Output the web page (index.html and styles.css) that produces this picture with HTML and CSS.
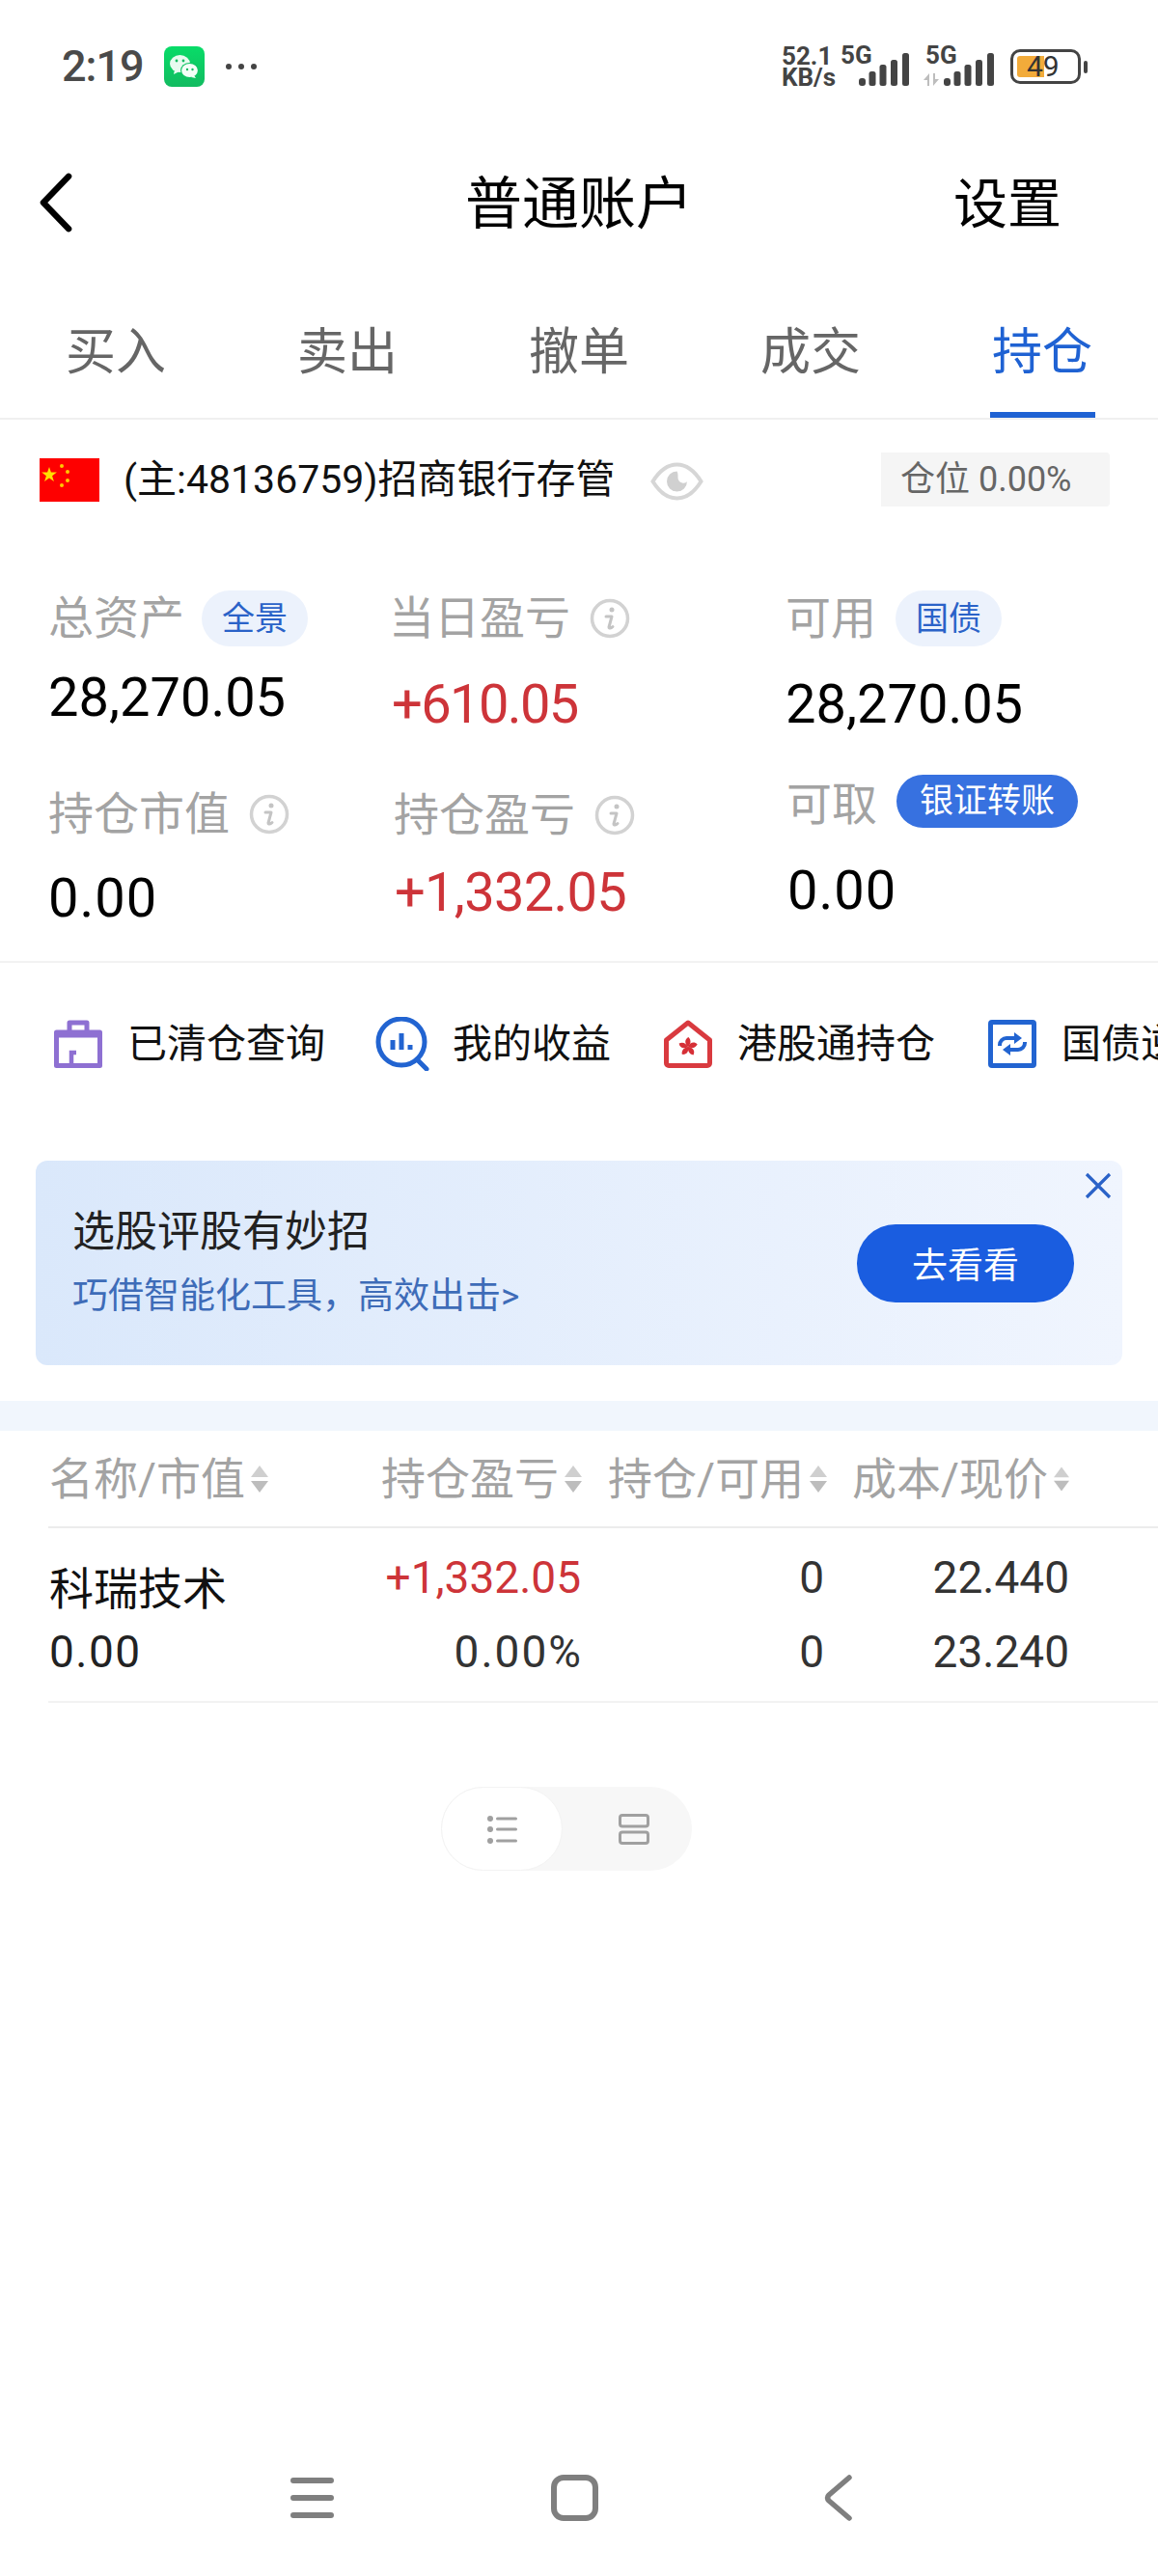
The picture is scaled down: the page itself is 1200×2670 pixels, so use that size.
FILE: index.html
```html
<!DOCTYPE html>
<html lang="zh-CN">
<head>
<meta charset="utf-8">
<title>普通账户</title>
<link rel="stylesheet" href="styles.css">
</head>
<body>
<div class="page">
  <header class="statusbar">
    <div class="status-left">
      <span class="time">2:19</span>
      <svg class="wechat" viewBox="0 0 42 42"><defs><linearGradient id="wg" x1="0" y1="0" x2="0" y2="1"><stop offset="0" stop-color="#08dc68"/><stop offset="1" stop-color="#12bb60"/></linearGradient></defs><rect width="42" height="42" rx="8" fill="url(#wg)"/><ellipse cx="16.5" cy="18" rx="10.5" ry="9" fill="#e8fbf0"/><path d="M11 24l-1 5 6-3z" fill="#e8fbf0"/><ellipse cx="26.5" cy="25" rx="9.5" ry="8" fill="#12c465"/><ellipse cx="26.5" cy="25" rx="8.4" ry="7" fill="#f4fff8"/><path d="M31 30l2 3-5-1z" fill="#f4fff8"/><circle cx="13" cy="15" r="1.4" fill="#12bb60"/><circle cx="20" cy="15" r="1.4" fill="#12bb60"/><circle cx="24" cy="24" r="1.2" fill="#12bb60"/><circle cx="29.5" cy="24" r="1.2" fill="#12bb60"/></svg>
      <svg class="dots" viewBox="0 0 34 8"><circle cx="4" cy="4" r="3" fill="#444"/><circle cx="17" cy="4" r="3" fill="#444"/><circle cx="30" cy="4" r="3" fill="#444"/></svg>
    </div>
    <div class="status-right">
      <div class="speed"><span>52.1</span><span>KB/s</span></div>
      <div class="signal">
        <span class="sig-label">5G</span>
        <svg class="bars" viewBox="0 0 52 34"><rect x="0" y="26" width="7" height="8" rx="3" fill="#444"/><rect x="10.500" y="19" width="7" height="15" rx="2.500" fill="#444"/><rect x="21.500" y="12" width="7" height="22" rx="2.500" fill="#444"/><rect x="33" y="7" width="7" height="27" rx="2.500" fill="#444"/><rect x="45" y="0" width="7" height="34" rx="2.500" fill="#444"/></svg>
      </div>
      <div class="signal signal-two">
        <span class="sig-label">5G</span>
        <svg class="arrows" viewBox="0 0 16 13"><path d="M6 0v13H4V7H0zM10 13V0h2v6h4z" fill="#bdbdbd"/></svg>
        <svg class="bars" viewBox="0 0 52 34"><rect x="0" y="26" width="7" height="8" rx="3" fill="#444"/><rect x="10.500" y="19" width="7" height="15" rx="2.500" fill="#444"/><rect x="21.500" y="12" width="7" height="22" rx="2.500" fill="#444"/><rect x="33" y="7" width="7" height="27" rx="2.500" fill="#444"/><rect x="45" y="0" width="7" height="34" rx="2.500" fill="#444"/></svg>
      </div>
      <div class="battery"><span class="battery-fill"></span><span class="battery-num">49</span></div>
      <span class="battery-nub"></span>
    </div>
  </header>

  <nav class="navbar">
    <svg class="back" viewBox="0 0 36 64"><path d="M31 4 4 32l27 28" fill="none" stroke="#000" stroke-width="6.5" stroke-linecap="round" stroke-linejoin="round"/></svg>
    <h1 class="nav-title">普通账户</h1>
    <span class="nav-action">设置</span>
  </nav>

  <div class="tabs">
    <div class="tab"><span class="tab-label">买入</span></div>
    <div class="tab"><span class="tab-label">卖出</span></div>
    <div class="tab"><span class="tab-label">撤单</span></div>
    <div class="tab"><span class="tab-label">成交</span></div>
    <div class="tab tab-active"><span class="tab-label">持仓</span></div>
  </div>

  <section class="account">
    <svg class="flag" viewBox="0 0 62 45"><rect width="62" height="45" fill="#fe0000"/><path d="M10 9l1.900 5.600h6l-4.800 3.600 1.800 5.700-4.900-3.500-4.900 3.500 1.800-5.700-4.800-3.600h6z" fill="#ffe000"/><circle cx="23" cy="8" r="2" fill="#ffc800"/><circle cx="29" cy="14" r="2" fill="#ffc800"/><circle cx="29" cy="23" r="2" fill="#ffc800"/><circle cx="23" cy="28" r="2" fill="#ffc800"/></svg>
    <span class="account-name">(主:48136759)招商银行存管</span>
    <svg class="eye" viewBox="0 0 55 40"><path d="M2.500 20C10 8 18 2.500 27.500 2.500S45 8 52.500 20C45 32 37 37.500 27.500 37.500S10 32 2.500 20z" fill="none" stroke="#d6d6d6" stroke-width="4"/><path d="M27.500 9.500a10.500 10.500 0 1 0 10.500 10.500c-1 1.500-3 2-5 1.500-3-.8-4.500-3-4.500-5.500 0-2 .3-4.500-1-6.500z" fill="#d0d0d0"/></svg>
    <span class="position">仓位 0.00%</span>
  </section>

  <section class="stats">
    <div class="stat-col">
      <div class="stat-label"><span>总资产</span><span class="chip">全景</span></div>
      <div class="stat-value value-a">28,270.05</div>
      <div class="stat-label label-a"><span>持仓市值</span><svg class="info" viewBox="0 0 42 42"><circle cx="21" cy="21" r="18.500" fill="none" stroke="#d2d2d2" stroke-width="3.500"/><circle cx="23" cy="12" r="2.500" fill="#c4c4c4"/><path d="M17 19h6l-3 11c0 1.500 2 1.500 4-.5" fill="none" stroke="#c4c4c4" stroke-width="3" stroke-linecap="round" stroke-linejoin="round"/></svg></div>
      <div class="stat-value value-b">0.00</div>
    </div>
    <div class="stat-col">
      <div class="stat-label"><span>当日盈亏</span><svg class="info" viewBox="0 0 42 42"><circle cx="21" cy="21" r="18.500" fill="none" stroke="#d2d2d2" stroke-width="3.500"/><circle cx="23" cy="12" r="2.500" fill="#c4c4c4"/><path d="M17 19h6l-3 11c0 1.500 2 1.500 4-.5" fill="none" stroke="#c4c4c4" stroke-width="3" stroke-linecap="round" stroke-linejoin="round"/></svg></div>
      <div class="stat-value up value-c">+610.05</div>
      <div class="stat-label label-b"><span>持仓盈亏</span><svg class="info" viewBox="0 0 42 42"><circle cx="21" cy="21" r="18.500" fill="none" stroke="#d2d2d2" stroke-width="3.500"/><circle cx="23" cy="12" r="2.500" fill="#c4c4c4"/><path d="M17 19h6l-3 11c0 1.500 2 1.500 4-.5" fill="none" stroke="#c4c4c4" stroke-width="3" stroke-linecap="round" stroke-linejoin="round"/></svg></div>
      <div class="stat-value up value-d">+1,332.05</div>
    </div>
    <div class="stat-col">
      <div class="stat-label"><span>可用</span><span class="chip chip-bond">国债</span></div>
      <div class="stat-value value-c">28,270.05</div>
      <div class="stat-label label-c"><span>可取</span><span class="chip chip-solid">银证转账</span></div>
      <div class="stat-value value-e">0.00</div>
    </div>
  </section>

  <section class="shortcuts">
    <div class="shortcut">
      <svg class="sc-icon" viewBox="0 0 50 50"><path d="M2.500 13h45v34.500h-45zM16 13V3h18v10" fill="none" stroke="#8e70d2" stroke-width="5" stroke-linejoin="round"/><path d="M2.500 15h45" stroke="#8e70d2" stroke-width="7"/><path d="M18 47.500V34h5" fill="none" stroke="#8e70d2" stroke-width="4.500"/></svg>
      <span>已清仓查询</span>
    </div>
    <div class="shortcut">
      <svg class="sc-icon sc-icon-wide" viewBox="0 0 56 56"><circle cx="27" cy="26" r="24" fill="none" stroke="#2264d1" stroke-width="5"/><path d="M43 44l10 10" stroke="#2264d1" stroke-width="5" stroke-linecap="round"/><path d="M18 24v10M27 17v17M36 29v5" stroke="#2264d1" stroke-width="5"/></svg>
      <span>我的收益</span>
    </div>
    <div class="shortcut">
      <svg class="sc-icon" viewBox="0 0 50 50"><path d="M25 3 47.500 21v24a2.500 2.500 0 0 1-2.500 2.500H5A2.500 2.500 0 0 1 2.500 45V21z" fill="none" stroke="#d93a3f" stroke-width="5" stroke-linejoin="round"/><g fill="#d62f36"><path d="M25 28C21 24.500 21.500 20 25.500 18C28.500 21 28 25 25 28z"/><path d="M25 28C21 24.500 21.500 20 25.500 18C28.500 21 28 25 25 28z" transform="rotate(72 25 28)"/><path d="M25 28C21 24.500 21.500 20 25.500 18C28.500 21 28 25 25 28z" transform="rotate(144 25 28)"/><path d="M25 28C21 24.500 21.500 20 25.500 18C28.500 21 28 25 25 28z" transform="rotate(216 25 28)"/><path d="M25 28C21 24.500 21.500 20 25.500 18C28.500 21 28 25 25 28z" transform="rotate(288 25 28)"/></g></svg>
      <span>港股通持仓</span>
    </div>
    <div class="shortcut">
      <svg class="sc-icon" viewBox="0 0 50 50"><rect x="2.500" y="2.500" width="45" height="45" rx="1.500" fill="none" stroke="#2264d1" stroke-width="5"/><path d="M12 27v-1a7 7 0 0 1 7-7h9M38 23v1a7 7 0 0 1-7 7h-9" fill="none" stroke="#2264d1" stroke-width="4"/><path d="M27 13l8 6-8 6zM23 25l-8 6 8 6z" fill="#2264d1"/></svg>
      <span>国债逆回购</span>
    </div>
  </section>

  <section class="promo">
    <div class="promo-text">
      <div class="promo-title">选股评股有妙招</div>
      <div class="promo-sub">巧借智能化工具，高效出击&gt;</div>
    </div>
    <button class="promo-btn">去看看</button>
    <svg class="promo-close" viewBox="0 0 28 28"><path d="M2 2l24 24M26 2 2 26" stroke="#2a62c8" stroke-width="3.200" fill="none"/></svg>
  </section>

  <div class="band"></div>

  <section class="table">
    <div class="table-head">
      <div class="th"><span>名称/市值</span><svg class="sort" viewBox="0 0 18 28"><path d="M9 0l9 12H0z" fill="#cfcfcf"/><path d="M9 28l9-12H0z" fill="#bdbdbd"/></svg></div>
      <div class="th"><span>持仓盈亏</span><svg class="sort" viewBox="0 0 18 28"><path d="M9 0l9 12H0z" fill="#cfcfcf"/><path d="M9 28l9-12H0z" fill="#bdbdbd"/></svg></div>
      <div class="th"><span>持仓/可用</span><svg class="sort" viewBox="0 0 18 28"><path d="M9 0l9 12H0z" fill="#cfcfcf"/><path d="M9 28l9-12H0z" fill="#bdbdbd"/></svg></div>
      <div class="th"><span>成本/现价</span><svg class="sort" viewBox="0 0 18 28"><path d="M9 0l9 12H0z" fill="#cfcfcf"/><path d="M9 28l9-12H0z" fill="#bdbdbd"/></svg></div>
    </div>
    <div class="table-row">
      <div class="td td-name">科瑞技术</div>
      <div class="td td-c2 up">+1,332.05</div>
      <div class="td td-c3">0</div>
      <div class="td td-c4">22.440</div>
      <div class="td td-first">0.00</div>
      <div class="td td-c2 td-pct">0.00%</div>
      <div class="td td-c3">0</div>
      <div class="td td-c4">23.240</div>
    </div>
  </section>

  <div class="toggle">
    <div class="toggle-item toggle-on">
      <svg class="toggle-list" viewBox="0 0 32 30"><g fill="#a0a0a0"><circle cx="4" cy="4" r="3"/><circle cx="4" cy="15" r="3"/><circle cx="4" cy="27" r="3"/><rect x="10" y="2.500" width="22" height="3" rx="1.500"/><rect x="10" y="13.500" width="22" height="3" rx="1.500"/><rect x="10" y="25.500" width="22" height="3" rx="1.500"/></g></svg>
    </div>
    <div class="toggle-item">
      <svg class="toggle-grid" viewBox="0 0 32 32"><rect x="1.500" y="1.500" width="29" height="11.500" rx="2.500" fill="none" stroke="#a0a0a0" stroke-width="3"/><rect x="1.500" y="19" width="29" height="11.500" rx="2.500" fill="none" stroke="#a0a0a0" stroke-width="3"/></svg>
    </div>
  </div>

  <footer class="sysnav">
    <svg class="sys-menu" viewBox="0 0 45 42"><path d="M3 3h39M3 21h39M3 39h39" stroke="#7f7f7f" stroke-width="6" stroke-linecap="round"/></svg>
    <svg class="sys-home" viewBox="0 0 49 48"><rect x="3" y="3" width="43" height="42" rx="10" fill="none" stroke="#7f7f7f" stroke-width="6"/></svg>
    <svg class="sys-back" viewBox="0 0 31 48"><path d="M27 3 6 21q-3 3 0 6l21 18" fill="none" stroke="#7f7f7f" stroke-width="5.500" stroke-linecap="round" stroke-linejoin="round"/></svg>
  </footer>
</div>
</body>
</html>
```
FILE: styles.css
```css
* { box-sizing: border-box; }
html, body { margin: 0; padding: 0; background: #fff; }
body {
  font-family: Roboto, "Noto Sans CJK SC", sans-serif;
  color: #000;
}
.page {
  width: 1200px;
  height: 2670px;
  overflow: hidden;
  display: flex;
  flex-direction: column;
}

/* status bar */
.statusbar {
  flex: none;
  height: 138px;
  display: flex;
  align-items: center;
  justify-content: space-between;
  padding: 0 73px 0 64px;
}
.status-left, .status-right { display: flex; align-items: center; }
.time { font-size: 45px; font-weight: 500; line-height: 50px; color: #4a4a4a; width: 106px; letter-spacing: -1px; }
.wechat { width: 42px; height: 42px; }
.dots { width: 34px; height: 8px; margin-left: 21px; }
.speed {
  display: flex;
  flex-direction: column;
  font-size: 26px;
  font-weight: 700;
  line-height: 22px;
  color: #444;
  width: 61px;
}
.signal { display: flex; position: relative; height: 40px; width: 52px; margin-left: 19px; }
.signal-two { margin-left: 36px; }
.sig-label {
  position: absolute;
  left: -19px;
  top: -4px;
  font-size: 26px;
  font-weight: 700;
  line-height: 24px;
  color: #444;
}
.bars { position: absolute; left: 0; bottom: 0; width: 52px; height: 34px; }
.arrows { position: absolute; left: -21px; bottom: 0; width: 16px; height: 13px; }
.battery {
  width: 73px;
  height: 36px;
  margin-left: 17px;
  border: 3.500px solid #444;
  border-radius: 10px;
  position: relative;
}
.battery-fill {
  position: absolute;
  left: 4px;
  top: 3.500px;
  width: 28px;
  height: 22px;
  background: #f2ab3a;
  border-radius: 3px 0 0 3px;
}
.battery-num {
  position: absolute;
  left: 14px;
  top: -2px;
  font-size: 30px;
  line-height: 34px;
  color: #333;
}
.battery-nub { width: 4px; height: 13px; margin-left: 3px; background: #444; border-radius: 2px; }

/* nav */
.navbar {
  flex: none;
  height: 144px;
  padding-left: 41px;
  display: grid;
  grid-template-columns: 441px 236px 1fr;
  align-items: center;
}
.back { width: 35px; height: 64px; }
.nav-title { margin: 0; padding-top: 3px; font-size: 59px; font-weight: 400; line-height: 70px; white-space: nowrap; }
.nav-action { justify-self: end; padding: 3px 100px 0 0; font-size: 56px; font-weight: 400; line-height: 70px; }

/* tabs */
.tabs {
  flex: none;
  height: 153px;
  display: flex;
  border-bottom: 2px solid #f0f0f0;
}
.tab { width: 240px; display: flex; justify-content: center; }
.tab-label {
  width: 109px;
  height: 151px;
  padding-top: 54px;
  font-size: 52px;
  line-height: 60px;
  color: #666;
  text-align: center;
  white-space: nowrap;
  border-bottom: 6px solid transparent;
}
.tab-active .tab-label { color: #1f62d3; border-bottom-color: #1f62d3; }

/* account */
.account {
  flex: none;
  height: 124px;
  display: flex;
  align-items: center;
  padding-left: 41px;
}
.flag { width: 62px; height: 45px; }
.account-name { margin-left: 25px; font-size: 41px; line-height: 50px; color: #111; white-space: nowrap; width: 546px; }
.eye { width: 55px; height: 40px; margin-top: 4px; }
.position {
  margin-left: 184px;
  width: 237px;
  height: 56px;
  background: #f5f5f5;
  border-radius: 0 4px 4px 0;
  padding-left: 20px;
  font-size: 36px;
  line-height: 56px;
  color: #666;
  white-space: nowrap;
}

/* stats */
.stats {
  flex: none;
  height: 440px;
  margin-top: -1px;
  padding: 53px 0 0 50px;
  display: grid;
  grid-template-columns: 353px 411px 1fr;
  border-bottom: 2px solid #f2f2f2;
}
.stat-label {
  display: flex;
  align-items: center;
  height: 60px;
  font-size: 47px;
  line-height: 60px;
  color: #a3a3a3;
  white-space: nowrap;
}
.stat-value { font-size: 56px; line-height: 60px; color: #000; white-space: nowrap; }
.stat-value.up { color: #cd3439; letter-spacing: -1.6px; margin-left: 3px; }
.stat-value.value-d { margin-left: 6px; margin-top: 20px; letter-spacing: -0.7px; }
.value-a { margin-top: 22px; }
.value-b { margin-top: 27px; letter-spacing: 1px; }
.value-c { margin-top: 29px; }
.value-e { margin-top: 29px; margin-left: 2px; letter-spacing: 1px; }
.label-a { margin-top: 61px; }
.label-b { margin-top: 55px; margin-left: 5px; }
.label-c { margin-top: 44px; margin-left: 1px; }
.chip {
  height: 58px;
  margin-left: 18px;
  padding: 0 21px;
  border-radius: 29px;
  background: #ecf2fc;
  color: #2a62c8;
  font-size: 34px;
  line-height: 58px;
}
.chip-bond { margin-left: 20px; }
.chip-solid {
  height: 55px;
  margin-left: 20px;
  margin-bottom: 7px;
  padding: 0 24px;
  background: #3771e0;
  color: #fff;
  font-size: 35px;
  line-height: 55px;
  border-radius: 28px;
}
.info { width: 42px; height: 42px; margin-left: 20px; }

/* shortcuts */
.shortcuts {
  flex: none;
  height: 168px;
  padding-left: 56px;
  display: flex;
  align-items: center;
  overflow: hidden;
}
.shortcut {
  flex: none;
  display: flex;
  align-items: center;
  gap: 26px;
  margin-right: 55px;
  font-size: 41px;
  line-height: 50px;
  color: #111;
  white-space: nowrap;
}
.shortcut:first-child { margin-right: 52px; }
.sc-icon { width: 50px; height: 50px; flex: none; }
.sc-icon-wide { width: 56px; height: 56px; margin-right: -2px; }

/* promo */
.promo {
  flex: none;
  position: relative;
  height: 212px;
  margin: 37px 37px 0;
  padding: 0 50px 0 38px;
  display: flex;
  align-items: center;
  justify-content: space-between;
  background: linear-gradient(90deg, #dae8fb, #f0f5fe);
  border-radius: 12px;
}
.promo-text { margin-top: -2px; }
.promo-title { font-size: 44px; line-height: 56px; color: #222; }
.promo-sub { margin-top: 16px; font-size: 37px; line-height: 46px; color: #3e6cb8; white-space: nowrap; }
.promo-btn {
  width: 225px;
  height: 81px;
  border: 0;
  border-radius: 40px;
  background: #1a5de0;
  color: #fff;
  font-family: inherit;
  font-size: 37px;
  padding: 0;
}
.promo-close { position: absolute; right: 11px; top: 12px; width: 28px; height: 28px; }

/* band */
.band { flex: none; height: 31px; margin-top: 37px; background: #f1f6fd; }

/* table */
.table-head, .table-row {
  margin-left: 50px;
  padding-left: 1px;
  display: grid;
  grid-template-columns: 344px 235px 253px 225px;
}
.table-head { flex: none; height: 101px; align-items: center; border-bottom: 2px solid #ececec; }
.table-row { flex: none; height: 181px; padding-top: 13px; align-content: start; grid-auto-rows: 77px; border-bottom: 2px solid #f2f2f2; }
.th { display: flex; align-items: center; gap: 6px; font-size: 46px; line-height: 60px; color: #a3a3a3; white-space: nowrap; }
.sort { width: 18px; height: 28px; }
.td { font-size: 46px; line-height: 77px; color: #333; white-space: nowrap; }
.td-name { color: #111; padding-top: 17px; line-height: 66px; }
.td-first { color: #222; letter-spacing: 1.5px; }
.td-c2 { text-align: right; padding-right: 28px; }
.td-c3 { text-align: right; padding-right: 29px; }
.td-c4 { text-align: right; }
.td-pct { letter-spacing: 2px; padding-right: 26px; }
.td.up { color: #cd3439; }

/* toggle */
.toggle {
  flex: none;
  width: 260px;
  height: 87px;
  margin: 87px 0 0 457px;
  display: flex;
  background: #f7f7f7;
  border-radius: 44px;
}
.toggle-item { flex: 1; display: flex; align-items: center; justify-content: center; padding-left: 14px; }
.toggle-on { flex: none; width: 126px; padding-left: 0; background: #fff; border: 1px solid #f3f3f3; border-radius: 44px; }
.toggle-list { width: 32px; height: 30px; }
.toggle-grid { width: 32px; height: 32px; }

/* system nav */
.sysnav {
  flex: none;
  margin-top: auto;
  height: 162px;
  padding-left: 301px;
  display: flex;
  align-items: center;
  gap: 225px;
}
.sys-menu { width: 45px; height: 42px; }
.sys-home { width: 49px; height: 48px; }
.sys-back { width: 31px; height: 48px; margin-left: 8px; }
```
